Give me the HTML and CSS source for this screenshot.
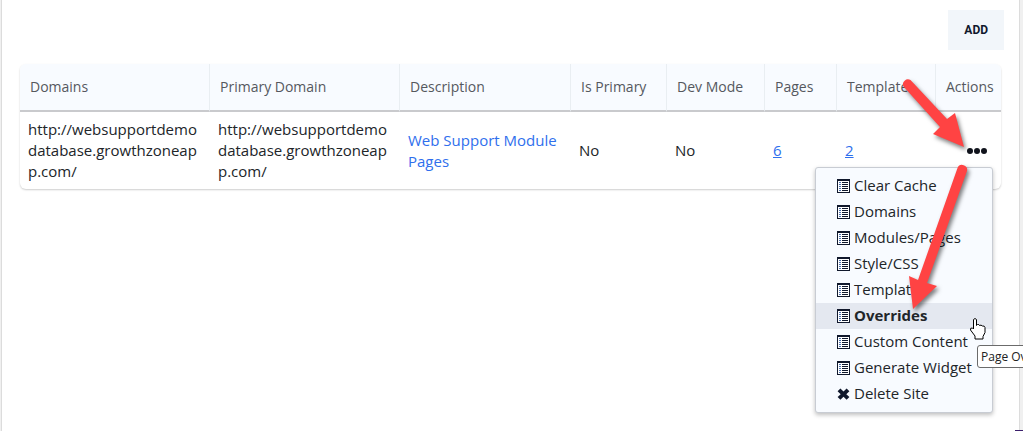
FILE: index.html
```html
<!DOCTYPE html>
<html lang="en">
<head>
    <meta charset="UTF-8">
    <meta name="viewport" content="width=device-width, initial-scale=1.0">
    <title>Sites</title>
    <link rel="stylesheet" href="styles.css">
</head>
<body>
    <svg class="symbols" aria-hidden="true">
        <symbol id="icon-list" viewBox="0 0 13 14">
            <path d="M0 0h13v14H0z" fill="#10182c"/>
            <path d="M1 2h11v11H1z" fill="#fff"/>
            <path d="M2 3h2v1H2zM2 5h2v1H2zM2 7h2v1H2zM2 9h2v1H2zM2 11h2v1H2z" fill="#4a6fae"/>
            <path d="M5 3h6v1H5zM5 5h6v1H5zM5 7h6v1H5zM5 9h6v1H5zM5 11h6v1H5z" fill="#10182c"/>
        </symbol>
        <symbol id="icon-delete" viewBox="0 0 13 14">
            <path d="M3.4 1.6 6.5 4.6 9.6 1.6 12.4 4.3 9.3 7.2 12.4 10.1 9.6 12.8 6.5 9.8 3.4 12.8 0.6 10.1 3.7 7.2 0.6 4.3z" fill="#10182c"/>
        </symbol>
    </svg>

    <main class="panel">
        <div class="toolbar">
            <button type="button" class="add-button">ADD</button>
        </div>

        <div class="table-wrap">
            <table class="sites">
                <colgroup>
                    <col class="col-domain">
                    <col class="col-domain">
                    <col class="col-description">
                    <col class="col-primary">
                    <col class="col-dev">
                    <col class="col-pages">
                    <col class="col-templates">
                    <col class="col-actions">
                </colgroup>
                <thead>
                    <tr>
                        <th scope="col">Domains</th>
                        <th scope="col">Primary Domain</th>
                        <th scope="col">Description</th>
                        <th scope="col">Is Primary</th>
                        <th scope="col">Dev Mode</th>
                        <th scope="col">Pages</th>
                        <th scope="col">Templates</th>
                        <th scope="col">Actions</th>
                    </tr>
                </thead>
                <tbody>
                    <tr>
                        <td class="url">http://websupportdemodatabase.growthzoneapp.com/</td>
                        <td class="url">http://websupportdemodatabase.growthzoneapp.com/</td>
                        <td><a class="description" href="#">Web Support Module Pages</a></td>
                        <td>No</td>
                        <td>No</td>
                        <td><a href="#">6</a></td>
                        <td><a href="#">2</a></td>
                        <td>
                            <div class="actions">
                                <button type="button" class="more" aria-label="Actions">
                                    <svg width="20" height="6" viewBox="0 0 20 6" fill="#10131c"><circle cx="3" cy="3" r="3"/><circle cx="10" cy="3" r="3"/><circle cx="17" cy="3" r="3"/></svg>
                                </button>
                                <div class="menu">
                                    <a href="#"><svg class="icon"><use href="#icon-list"/></svg>Clear Cache</a>
                                    <a href="#"><svg class="icon"><use href="#icon-list"/></svg>Domains</a>
                                    <a href="#"><svg class="icon"><use href="#icon-list"/></svg>Modules/Pages</a>
                                    <a href="#"><svg class="icon"><use href="#icon-list"/></svg>Style/CSS</a>
                                    <a href="#"><svg class="icon"><use href="#icon-list"/></svg>Templates</a>
                                    <a href="#" class="active"><svg class="icon"><use href="#icon-list"/></svg>Overrides</a>
                                    <a href="#"><svg class="icon"><use href="#icon-list"/></svg>Custom Content</a>
                                    <a href="#"><svg class="icon"><use href="#icon-list"/></svg>Generate Widget</a>
                                    <a href="#"><svg class="icon"><use href="#icon-delete"/></svg>Delete Site</a>
                                </div>
                            </div>
                        </td>
                    </tr>
                </tbody>
            </table>
        </div>
    </main>

    <div class="tooltip">Page Overrides</div>
    <div class="widget"></div>

    <!-- arrows and pointer -->
    <svg class="annotations" width="140" height="280" viewBox="890 70 140 280" aria-hidden="true">
        <g class="arrow">
            <path d="M903.500 86.500A5 5 0 0 1 910.500 80L947 119 955 113 964 147 933 134 940 127z"/>
            <path d="M957.500 168A5 5 0 0 1 967 171L927 283 937 286 913 309 909 276 918 280z"/>
        </g>
        <path d="M973.500 319.500q1.500-2 3 0v6l1-1q1.500-.5 2 1 1.500-1 3 .5 2-.5 2.500 1.500v5l-2 4v2.500h-8V336l-4.500-6q-.5-2.500 2-2l1 1z" fill="#fff" stroke="#000"/>
    </svg>
</body>
</html>
```
FILE: styles.css
```css
* {
    box-sizing: border-box;
}
body {
    margin: 0;
    min-height: 100vh;
    padding: 0 3px 0 1px;
    position: relative;
    overflow: hidden;
    display: flex;
    background: #f0f0f0;
    color: #212529;
    font-family: "Open Sans", "Noto Sans", sans-serif;
    font-size: 15px;
    line-height: 21px;
}
a {
    color: #2f6fed;
}
.symbols {
    position: absolute;
    width: 0;
    height: 0;
}
.panel {
    flex: 1;
    padding: 10px 0;
    background: #fff;
    border: solid #dcdcdc;
    border-width: 0 1px;
}
.toolbar {
    display: flex;
    justify-content: flex-end;
    padding: 0 15px 14px;
}
.add-button {
    height: 40px;
    padding: 0 16px;
    border: none;
    background: #f2f6fa;
    color: #10182c;
    font: bold 12px Roboto, sans-serif;
    cursor: pointer;
}
.table-wrap {
    padding: 0 18px;
}
.sites {
    width: 100%;
    table-layout: fixed;
    border-spacing: 0;
    border-radius: 6px;
    box-shadow: 0 1px 2px rgba(0, 0, 0, 0.2);
}
.col-domain {
    width: 190px;
}
.col-description {
    width: 171px;
}
.col-primary {
    width: 96px;
}
.col-dev {
    width: 98px;
}
.col-pages {
    width: 72px;
}
.col-templates {
    width: 99px;
}
.col-actions {
    width: 65px;
}
th {
    height: 48px;
    padding: 0 0 2px 10px;
    background: #f8fbff;
    border-right: 1px solid #e9eef2;
    border-bottom: 2px solid #c9cacd;
    color: #55585e;
    font-size: 14px;
    font-weight: normal;
    text-align: left;
}
th:first-child {
    border-top-left-radius: 6px;
}
th:last-child {
    border-right: none;
    border-top-right-radius: 6px;
}
td {
    padding: 7px 8px;
}
.url {
    word-break: break-all;
}
.description {
    text-decoration: none;
}
.actions {
    position: relative;
    display: flex;
    justify-content: flex-end;
}
.more {
    height: 32px;
    padding: 0 6px;
    border: none;
    background: none;
    cursor: pointer;
}
.more svg {
    display: block;
}
.menu {
    position: absolute;
    top: 100%;
    right: 0;
    width: 178px;
    padding: 5px 0;
    background: #f8fbff;
    border: 1px solid #c8ccd3;
    border-radius: 3px;
    box-shadow: 0 2px 4px rgba(0, 0, 0, 0.25);
}
.menu a {
    display: flex;
    align-items: center;
    gap: 4px;
    height: 26px;
    padding-left: 21px;
    color: #212529;
    text-decoration: none;
    white-space: nowrap;
}
.menu .active {
    background: #e4e8f0;
    font-weight: bold;
}
.icon {
    width: 13px;
    height: 14px;
}
.tooltip {
    position: absolute;
    top: 345px;
    left: 977px;
    padding: 0 3px;
    background: #fff;
    border: 1px solid #6b6b6b;
    border-radius: 3px;
    color: #222;
    font-size: 12px;
    white-space: nowrap;
}
/* top edge of the help widget */
.widget {
    position: absolute;
    right: 0;
    bottom: 0;
    width: 8px;
    height: 1px;
    background: #3b1f6b;
}
.annotations {
    position: absolute;
    top: 70px;
    left: 890px;
    pointer-events: none;
}
.arrow {
    fill: #ff4343;
    filter: drop-shadow(2px 3px 2px rgba(0, 0, 0, 0.5));
}
```
